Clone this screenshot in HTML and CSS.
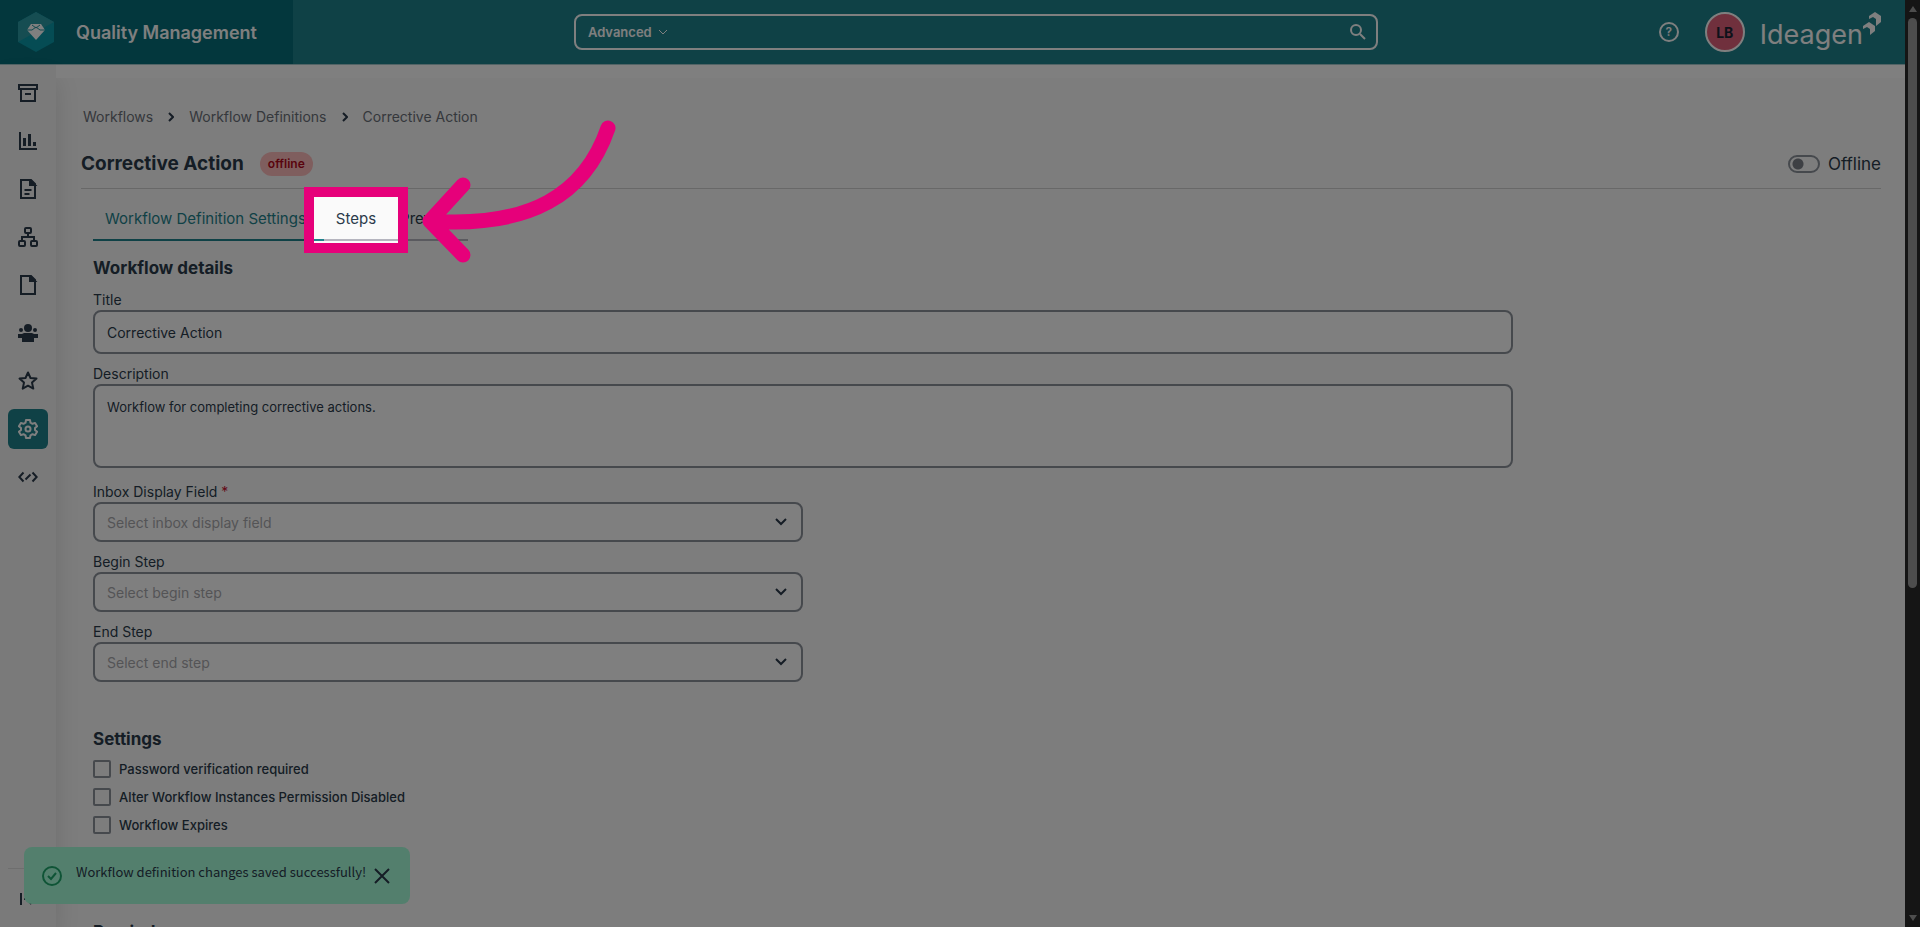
FILE: index.html
```html
<!DOCTYPE html>
<html lang="en">
<head>
    <meta charset="UTF-8">
    <title>Quality Management</title>
    <link rel="stylesheet" href="styles.css">
</head>
<body>
    <div class="app">
        <!-- Top bar -->
        <header class="topbar">
            <a class="brand" href="#">
                <svg width="36" height="40" viewBox="0 0 36 40">
                    <path d="M18 0 36 10v20L18 40 0 30V10z" fill="#0a98a8"/>
                    <path d="M18 0 36 10 0 30V10z" fill="#2c9aa5"/>
                    <path d="M13 12h10l4 6-9 10L9 18z" fill="#fff"/>
                    <path d="M9 18h5l4-3 4 3h5M14 13l4 3 4-3" fill="none" stroke="#1f929e" stroke-width="1"/>
                </svg>
                <span>Quality Management</span>
            </a>
            <form class="search">
                <button type="button" class="advanced">Advanced
                    <svg width="10" height="6" viewBox="0 0 10 6"><path d="m1 1 4 4 4-4"/></svg>
                </button>
                <input type="text" aria-label="Search">
                <button type="button" class="search-btn" aria-label="Search">
                    <svg width="18" height="18" viewBox="0 0 18 18"><circle cx="7" cy="7" r="5"/><path d="m11 11 5 5"/></svg>
                </button>
            </form>
            <div class="account">
                <button type="button" class="help" aria-label="Help">?</button>
                <button type="button" class="avatar">LB</button>
                <a class="logo" href="#">
                    <span>Ideagen</span>
                    <svg width="18" height="24" viewBox="0 0 18 24">
                        <path d="M6 4 12 0l6 4v6l-5 4V7l-3-2-4 2zM0 14l6-4 6 4v5l-5 4v-6l-3-2-4 2z" fill="#fff"/>
                    </svg>
                </a>
            </div>
        </header>

        <div class="body">
            <!-- Side navigation -->
            <nav class="sidebar">
                <a href="#" aria-label="Records"><svg viewBox="0 0 20 20"><path d="M1 2h18v4H1zM3 6v12h14V6M7 11h6"/></svg></a>
                <a href="#" aria-label="Reports"><svg viewBox="0 0 20 20"><path d="M2 1v17h17"/><path d="M6.500 7v8M11.500 3v12M16.500 11v4" stroke-width="3"/></svg></a>
                <a href="#" aria-label="Documents"><svg viewBox="0 0 20 20"><path d="M3 1h10l4 4v14H3zM6.500 11h7M6.500 15h5"/><path d="M12 1v5h5z" fill="currentColor"/></svg></a>
                <a href="#" aria-label="Workflows"><svg viewBox="0 0 20 20"><rect x="7" y="1" width="6" height="5" rx="1"/><rect x="1" y="14" width="6" height="5" rx="1"/><rect x="13" y="14" width="6" height="5" rx="1"/><path d="M10 6v4M4 14v-4h12v4"/></svg></a>
                <a href="#" aria-label="Files"><svg viewBox="0 0 20 20"><path d="M3 1h10l4 4v14H3z"/><path d="M12 1v5h5z" fill="currentColor"/></svg></a>
                <a href="#" aria-label="People"><svg viewBox="0 0 20 20"><g fill="currentColor" stroke="none"><circle cx="10" cy="5" r="4"/><circle cx="3" cy="7" r="2"/><circle cx="17" cy="7" r="2"/><path d="M0 11h4l2-1h8l2 1h4v4h-4v4H4v-4H0z"/></g></svg></a>
                <a href="#" aria-label="Favourites"><svg viewBox="0 0 20 20"><path stroke-linejoin="round" d="m10 1.500 2.500 5.500 6 .600-4.500 4 1.300 6L10 14.700l-5.300 2.900 1.300-6-4.500-4 6-.600z"/></svg></a>
                <a href="#" class="active" aria-label="Settings"><svg viewBox="0 0 20 20"><path stroke-linejoin="round" d="M8 1h4l.500 2.700 2 1.100 2.600-.900 2 3.400-2.100 1.800v1.800l2.100 1.800-2 3.400-2.600-.900-2 1.100L12 19H8l-.500-2.700-2-1.100-2.600.900-2-3.400L3 10.900V9.100L.900 7.300l2-3.400 2.600.900 2-1.100z"/><circle cx="10" cy="10" r="2.500"/></svg></a>
                <a href="#" aria-label="Developer"><svg viewBox="0 0 20 20"><path d="M5.500 5.500 1.300 10l4.200 4.500M14.500 5.500l4.200 4.500-4.200 4.500M12.500 7.500l-5 5"/></svg></a>
                <div class="sidebar-foot">
                    <a href="#" aria-label="Expand"><svg viewBox="0 0 20 20"><path d="M3 4v12M6 10h11M12 5l5 5-5 5"/></svg></a>
                </div>
            </nav>

            <main class="main">
                <nav class="breadcrumb">
                    <a href="#">Workflows</a>
                    <svg width="6" height="10" viewBox="0 0 6 10"><path d="m1 1 4 4-4 4"/></svg>
                    <a href="#">Workflow Definitions</a>
                    <svg width="6" height="10" viewBox="0 0 6 10"><path d="m1 1 4 4-4 4"/></svg>
                    <a href="#">Corrective Action</a>
                </nav>

                <div class="title-row">
                    <h1>Corrective Action</h1>
                    <span class="badge">offline</span>
                    <label class="toggle"><input type="checkbox">Offline</label>
                </div>

                <div class="tabs">
                    <button type="button" class="tab selected">Workflow Definition Settings</button>
                    <div class="tab-target">
                        <button type="button" class="tab">Steps</button>
                        <div class="spotlight"></div>
                        <svg class="arrow" width="200" height="160" viewBox="0 0 200 160">
                            <path d="M188 18C165 85 110 118 10 111M43 75 10 111l33 34"/>
                        </svg>
                    </div>
                    <button type="button" class="tab">Preview</button>
                </div>

                <form class="form">
                    <h2>Workflow details</h2>
                    <div class="field">
                        <label for="title">Title</label>
                        <input type="text" id="title" value="Corrective Action">
                    </div>
                    <div class="field">
                        <label for="description">Description</label>
                        <textarea id="description">Workflow for completing corrective actions.</textarea>
                    </div>
                    <div class="field half">
                        <label for="inbox">Inbox Display Field <span class="required">*</span></label>
                        <div class="select">
                            <select id="inbox"><option>Select inbox display field</option></select>
                            <svg width="12" height="8" viewBox="0 0 12 8"><path d="m1 1 5 5 5-5"/></svg>
                        </div>
                    </div>
                    <div class="field half">
                        <label for="begin">Begin Step</label>
                        <div class="select">
                            <select id="begin"><option>Select begin step</option></select>
                            <svg width="12" height="8" viewBox="0 0 12 8"><path d="m1 1 5 5 5-5"/></svg>
                        </div>
                    </div>
                    <div class="field half">
                        <label for="end">End Step</label>
                        <div class="select">
                            <select id="end"><option>Select end step</option></select>
                            <svg width="12" height="8" viewBox="0 0 12 8"><path d="m1 1 5 5 5-5"/></svg>
                        </div>
                    </div>

                    <h2 class="section">Settings</h2>
                    <label class="check"><input type="checkbox">Password verification required</label>
                    <label class="check"><input type="checkbox">Alter Workflow Instances Permission Disabled</label>
                    <label class="check"><input type="checkbox">Workflow Expires</label>

                    <h2 class="section reminders">Reminders</h2>
                </form>
            </main>
        </div>
    </div>

    <!-- Page scrollbar -->
    <div class="scrollbar">
        <svg width="8" height="6" viewBox="0 0 8 6"><path d="M4 0 8 6H0z"/></svg>
        <div class="track"><div class="thumb"></div></div>
        <svg width="8" height="6" viewBox="0 0 8 6"><path d="M0 0h8L4 6z"/></svg>
    </div>

    <div class="toast">
        <svg width="20" height="20" viewBox="0 0 20 20"><circle cx="10" cy="10" r="9"/><path d="m6 10 3 3 5-6"/></svg>
        <span>Workflow definition changes saved successfully!</span>
        <button type="button" aria-label="Close">
            <svg width="16" height="16" viewBox="0 0 16 16"><path d="m1 1 14 14M15 1 1 15"/></svg>
        </button>
    </div>
</body>
</html>
```

FILE: styles.css
```css
* {
    box-sizing: border-box;
}
body {
    margin: 0;
    height: 100vh;
    display: flex;
    overflow: hidden;
    background-color: #fafafa;
    color: #2b3a4b;
    font-family: Inter, "Liberation Sans", sans-serif;
    font-size: 14px;
}
button, input, select, textarea {
    font: inherit;
    color: inherit;
}
button {
    padding: 0;
    border: none;
    background: none;
    cursor: pointer;
}
a {
    color: inherit;
    text-decoration: none;
}
svg {
    fill: none;
    stroke: currentColor;
    stroke-width: 2;
    flex-shrink: 0;
}
.app {
    flex: 1;
    min-width: 0;
    display: flex;
    flex-direction: column;
}

/* top bar */
.topbar {
    display: flex;
    align-items: center;
    height: 65px;
    flex-shrink: 0;
    background-color: #1f838d;
    border-bottom: 1px solid #a5c8cc;
    color: #fff;
}
.brand {
    display: flex;
    align-items: center;
    gap: 22px;
    width: 293px;
    height: 64px;
    padding-left: 18px;
    background-color: #066e7a;
    font-size: 18px;
    font-weight: 600;
}
.brand svg {
    stroke: none;
}
.search {
    display: flex;
    align-items: center;
    flex: 0 1 804px;
    height: 36px;
    margin-left: auto;
    padding: 0 9px 0 12px;
    border: 2px solid #fff;
    border-radius: 8px;
}
.search input {
    flex: 1;
    border: none;
    outline: none;
    background: none;
}
.advanced {
    display: flex;
    align-items: center;
    gap: 6px;
    font-size: 13px;
    font-weight: 600;
}
.advanced svg {
    stroke-width: 1;
}
.search-btn {
    display: flex;
}
.account {
    display: flex;
    align-items: center;
    margin-left: auto;
    padding-right: 24px;
}
.help {
    width: 20px;
    height: 20px;
    border: 2px solid #fff;
    border-radius: 50%;
    font-size: 12px;
    line-height: 16px;
    font-weight: 600;
}
.avatar {
    width: 40px;
    height: 40px;
    margin: 0 15px 0 26px;
    border: 2px solid #fff;
    border-radius: 50%;
    background-color: #e0607a;
    color: #1c2434;
    font-weight: 700;
}
.logo {
    display: flex;
    height: 40px;
    font-size: 27px;
    line-height: 46px;
    font-weight: 400;
}
.logo svg {
    stroke: none;
}

/* side navigation */
.body {
    flex: 1;
    min-height: 0;
    display: flex;
}
.sidebar {
    display: flex;
    flex-direction: column;
    align-items: center;
    gap: 8px;
    width: 56px;
    flex-shrink: 0;
    padding-top: 8px;
    background-color: #f5f5f5;
    box-shadow: 0 14px 24px rgba(0, 0, 0, 0.12);
}
.sidebar a {
    display: grid;
    place-items: center;
    width: 40px;
    height: 40px;
    border-radius: 6px;
}
.sidebar svg {
    width: 20px;
    height: 20px;
}
.sidebar .active {
    background-color: #1f838d;
    color: #fff;
}
.sidebar-foot {
    margin-top: auto;
    padding: 10px 0 8px;
    border-top: 1px solid #dcdcdc;
}

/* page content */
.main {
    flex: 1;
    min-width: 0;
    padding: 0 24px 0 25px;
    border-top: 13px solid #fff;
}
.breadcrumb {
    display: flex;
    align-items: center;
    gap: 15px;
    padding: 29px 0 0 2px;
    line-height: 20px;
    color: #6b7078;
}
.breadcrumb svg {
    color: #2b3a4b;
}
.title-row {
    display: flex;
    align-items: center;
    gap: 16px;
    height: 62px;
    padding-top: 12px;
    border-bottom: 1px solid #d0d0d0;
}
h1, h2 {
    margin: 0;
}
h1 {
    font-size: 19px;
    line-height: 24px;
}
.badge {
    padding: 0 8px;
    border-radius: 12px;
    background-color: #ffbcbc;
    color: #b3071b;
    font-size: 12px;
    line-height: 24px;
    font-weight: 600;
}
.toggle {
    display: flex;
    align-items: center;
    gap: 8px;
    margin-left: auto;
    font-size: 17px;
}
.toggle input {
    appearance: none;
    width: 32px;
    height: 18px;
    margin: 0;
    border: 2px solid #8c929b;
    border-radius: 9px;
    background: radial-gradient(circle at 8px 7px, #7c8088 5px, transparent 6px);
}
.tabs {
    display: flex;
    padding: 10px 0 0 12px;
}
.tab {
    height: 42px;
    padding: 0 12px 2px;
    border-bottom: 2px solid #b5b5bf;
    font-size: 15px;
}
.tab.selected {
    padding-right: 18px;
    border-color: #1f838d;
    color: #1f838d;
}
.tab-target {
    position: relative;
}

/* walkthrough highlight: everything outside the frame is dimmed */
.spotlight {
    position: absolute;
    top: -2px;
    left: -10px;
    right: -10px;
    height: 46px;
    z-index: 10;
    outline: 10px solid #e6007a;
    box-shadow: 0 0 0 3000px rgba(0, 0, 0, 0.5);
    pointer-events: none;
}
.arrow {
    position: absolute;
    top: -89px;
    left: 96px;
    z-index: 11;
    stroke: #e6007a;
    stroke-width: 15;
    stroke-linecap: round;
    stroke-linejoin: round;
    pointer-events: none;
}

/* form */
.form {
    padding: 15px 0 0 12px;
    max-width: 1432px;
}
h2 {
    font-size: 17px;
    line-height: 24px;
}
.field {
    margin-top: 10px;
}
.field label {
    display: block;
    line-height: 20px;
}
.field input, .field textarea, .field select {
    display: block;
    width: 100%;
    height: 44px;
    padding: 0 12px;
    border: 2px solid #8c929b;
    border-radius: 8px;
    background-color: #fff;
    outline: none;
}
.field textarea {
    height: 84px;
    margin-bottom: 14px;
    padding: 13px 12px;
    font-size: 13px;
    resize: none;
}
.half {
    width: 50%;
}
.required {
    color: #c8102e;
}
.select {
    position: relative;
}
.field select {
    height: 40px;
    appearance: none;
    color: #a9a9ad;
}
.select svg {
    position: absolute;
    right: 16px;
    top: 16px;
}
.section {
    margin: 45px 0 9px;
}
.check {
    display: flex;
    align-items: center;
    gap: 8px;
    height: 18px;
    margin-bottom: 10px;
    font-size: 13px;
    font-weight: 500;
}
.check input {
    appearance: none;
    width: 18px;
    height: 18px;
    margin: 0;
    border: 2px solid #8c929b;
    border-radius: 2px;
}
.reminders {
    margin-top: 86px;
}

/* scrollbar */
.scrollbar {
    display: flex;
    flex-direction: column;
    align-items: center;
    gap: 6px;
    width: 15px;
    padding: 6px 0;
    background-color: #2b2b2b;
}
.scrollbar svg {
    fill: #9b9b9b;
    stroke: none;
}
.track {
    flex: 1;
}
.thumb {
    width: 9px;
    height: 64%;
    border-radius: 5px;
    background-color: #9b9b9b;
}

/* toast */
.toast {
    position: absolute;
    left: 24px;
    bottom: 23px;
    display: flex;
    align-items: center;
    height: 57px;
    padding: 0 20px 0 18px;
    border-radius: 8px;
    background-color: #a6ffdb;
    font-family: "Noto Sans CJK SC", "Noto Sans", sans-serif;
    font-size: 13px;
}
.toast > svg {
    margin-right: 14px;
    color: #1ea86c;
}
.toast span {
    padding-bottom: 8px;
}
.toast button {
    display: flex;
    margin-left: 8px;
}
```
